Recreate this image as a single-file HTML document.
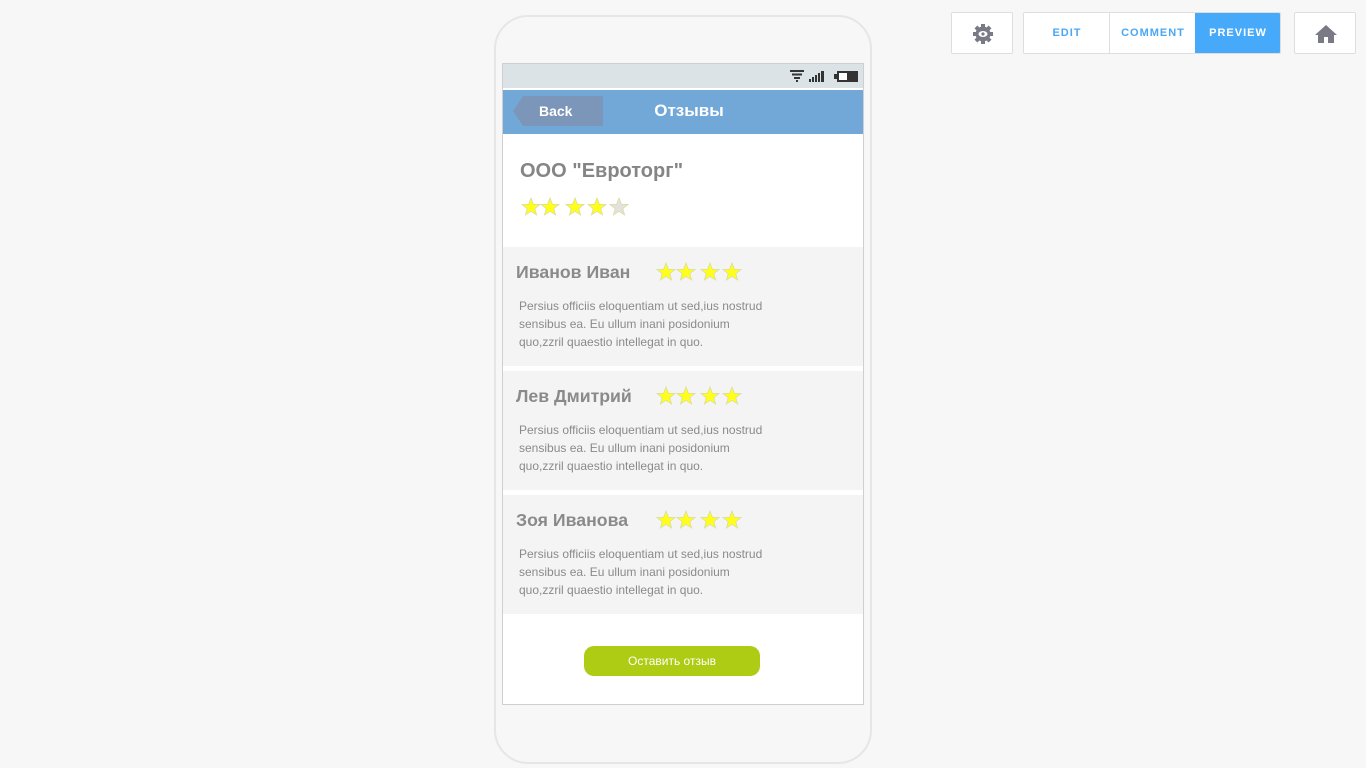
<!DOCTYPE html>
<html><head><meta charset="utf-8"><style>
*{margin:0;padding:0;box-sizing:border-box}
body{width:1366px;height:768px;background:#f7f7f7;font-family:"Liberation Sans","Noto Sans CJK SC",sans-serif;position:relative;overflow:hidden}
.abs{position:absolute}
.phone{left:494px;top:15px;width:378px;height:749px;border:2px solid #e6e6e6;border-radius:34px;background:#f7f7f7}
.screen{left:502px;top:63px;width:362px;height:642px;border:1px solid #cfcfcf;background:#fff;overflow:hidden}
.status{left:0;top:0;width:360px;height:25px;background:#dce3e6;border-bottom:1px solid #fff}
.nav{left:0;top:26px;width:360px;height:44px;background:#72a8d8}
.back{left:10px;top:32px;width:90px;height:30px}
.title{left:0;top:37px;width:460px;text-align:center;color:#fff;font-weight:bold;font-size:17px}
.star{position:absolute;width:20px;height:20px}
.card{left:0;width:360px;height:119px;background:#f4f4f4}
.name{left:13px;top:15px;font-size:17.7px;font-weight:bold;color:#8a8a8a}
.txt{left:16px;top:50px;font-size:12px;line-height:18px;color:#8a8a8a;width:252px}
.btn{border:1px solid #dedede;background:#fff;border-radius:2px}
.tab{font-family:"Liberation Sans",sans-serif;font-weight:bold;font-size:11px;letter-spacing:1px;color:#4aa7f5;text-align:center;line-height:40px}
</style></head><body>
<svg width="0" height="0" style="position:absolute"><defs><symbol id="s" viewBox="0 0 20 20"><polygon points="10,1 12.4,7.3 19,7.5 13.8,11.6 15.6,18 10,14.3 4.4,18 6.2,11.6 1,7.5 7.6,7.3" stroke="#dcdca0" stroke-width="0.8"/></symbol></defs></svg>
<div class="abs phone"></div>
<div class="abs screen">
 <div class="abs status">
  <svg class="abs" style="left:286px;top:5px" width="70" height="14">
   <rect x="1" y="1" width="14" height="2" fill="#333"/><rect x="3" y="4.5" width="10" height="2" fill="#333"/><rect x="5" y="8" width="6" height="2" fill="#333"/><rect x="7" y="11" width="2" height="2" fill="#333"/>
   <rect x="20" y="10" width="2" height="3" fill="#333"/><rect x="23" y="8" width="2" height="5" fill="#333"/><rect x="26" y="6" width="2" height="7" fill="#333"/><rect x="29" y="4" width="2" height="9" fill="#333"/><rect x="32" y="2" width="3" height="11" fill="#333"/>
   <rect x="48" y="2" width="21" height="11" fill="#333"/><rect x="45" y="5" width="3" height="5" fill="#333"/><rect x="50" y="4" width="8" height="7" fill="#fff"/>
  </svg>
 </div>
 <div class="abs nav"></div>
 <svg class="abs back" viewBox="0 0 90 30"><polygon points="10,0 90,0 90,30 10,30 0,15" fill="#7b96b8"/><text x="26" y="20" font-family="Liberation Sans" font-weight="bold" font-size="14" fill="#fff">Back</text></svg>
 <div class="abs title" style="left:-44px">Отзывы</div>
 <div class="abs" style="left:17px;top:96px;font-size:20px;font-weight:bold;color:#858585">ООО "Евроторг"</div>
 <svg class="star" style="left:18px;top:133px;fill:#ffff1a"><use href="#s"/></svg>
 <svg class="star" style="left:37px;top:133px;fill:#ffff1a"><use href="#s"/></svg>
 <svg class="star" style="left:62px;top:133px;fill:#ffff1a"><use href="#s"/></svg>
 <svg class="star" style="left:84px;top:133px;fill:#ffff1a"><use href="#s"/></svg>
 <svg class="star" style="left:106px;top:133px;fill:#e2e2e2"><use href="#s"/></svg>

 <div class="abs card" style="top:183px">
  <div class="abs name">Иванов Иван</div>
  <svg class="star" style="left:153px;top:15px;fill:#ffff1a"><use href="#s"/></svg><svg class="star" style="left:173px;top:15px;fill:#ffff1a"><use href="#s"/></svg><svg class="star" style="left:197px;top:15px;fill:#ffff1a"><use href="#s"/></svg><svg class="star" style="left:219px;top:15px;fill:#ffff1a"><use href="#s"/></svg>
  <div class="abs txt">Persius officiis eloquentiam ut sed,ius nostrud sensibus ea. Eu ullum inani posidonium quo,zzril quaestio intellegat in quo.</div>
 </div>
 <div class="abs card" style="top:307px">
  <div class="abs name">Лев Дмитрий</div>
  <svg class="star" style="left:153px;top:15px;fill:#ffff1a"><use href="#s"/></svg><svg class="star" style="left:173px;top:15px;fill:#ffff1a"><use href="#s"/></svg><svg class="star" style="left:197px;top:15px;fill:#ffff1a"><use href="#s"/></svg><svg class="star" style="left:219px;top:15px;fill:#ffff1a"><use href="#s"/></svg>
  <div class="abs txt">Persius officiis eloquentiam ut sed,ius nostrud sensibus ea. Eu ullum inani posidonium quo,zzril quaestio intellegat in quo.</div>
 </div>
 <div class="abs card" style="top:431px">
  <div class="abs name">Зоя Иванова</div>
  <svg class="star" style="left:153px;top:15px;fill:#ffff1a"><use href="#s"/></svg><svg class="star" style="left:173px;top:15px;fill:#ffff1a"><use href="#s"/></svg><svg class="star" style="left:197px;top:15px;fill:#ffff1a"><use href="#s"/></svg><svg class="star" style="left:219px;top:15px;fill:#ffff1a"><use href="#s"/></svg>
  <div class="abs txt">Persius officiis eloquentiam ut sed,ius nostrud sensibus ea. Eu ullum inani posidonium quo,zzril quaestio intellegat in quo.</div>
 </div>
 <div class="abs" style="left:81px;top:582px;width:176px;height:30px;background:#aecc13;border-radius:10px;color:#fff;font-size:12px;text-align:center;line-height:30px">Оставить отзыв</div>
</div>

<div class="abs btn" style="left:951px;top:12px;width:62px;height:42px">
 <svg class="abs" style="left:20px;top:10px" width="22" height="22" viewBox="0 0 22 22"><g fill="#7a7a86"><circle cx="11" cy="11" r="7.5"/><g><rect x="9" y="1" width="4" height="20"/><rect x="1" y="9" width="20" height="4"/><rect x="9" y="1" width="4" height="20" transform="rotate(45 11 11)"/><rect x="9" y="1" width="4" height="20" transform="rotate(-45 11 11)"/></g></g><ellipse cx="11" cy="11" rx="4.5" ry="3" fill="#fff"/><circle cx="11" cy="11" r="1.6" fill="#7a7a86"/></svg>
</div>
<div class="abs btn" style="left:1023px;top:12px;width:258px;height:42px;overflow:hidden">
 <div class="abs tab" style="left:0;top:0;width:86px">EDIT</div>
 <div class="abs" style="left:85px;top:0;width:1px;height:42px;background:#dedede"></div>
 <div class="abs tab" style="left:86px;top:0;width:86px">COMMENT</div>
 <div class="abs tab" style="left:171px;top:0;width:86px;height:42px;background:#47a9fa;color:#fff">PREVIEW</div>
</div>
<div class="abs btn" style="left:1294px;top:12px;width:62px;height:42px">
 <svg class="abs" style="left:20px;top:11px" width="22" height="20" viewBox="0 0 22 20"><polygon points="11,1 22,11 19,11 19,19 13,19 13,13 9,13 9,19 3,19 3,11 0,11" fill="#7a7a86"/></svg>
</div>
</body></html>
